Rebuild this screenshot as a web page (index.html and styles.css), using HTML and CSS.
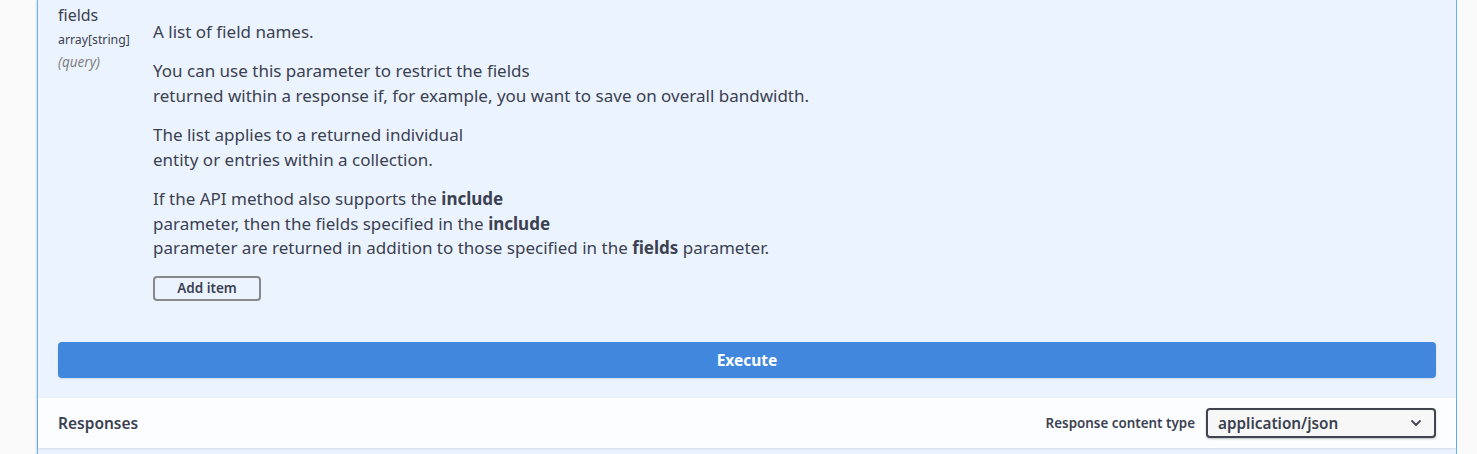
FILE: index.html
```html
<!DOCTYPE html>
<html>
<head>
<meta charset="utf-8">
<link rel="stylesheet" href="styles.css">
</head>
<body>
<div class="page">
  <div class="opblock">
    <div class="param-row">
      <div class="param-name">
        <div class="name">fields</div>
        <div class="type">array[string]</div>
        <div class="in">(query)</div>
      </div>
      <div class="param-desc">
        <p>A list of field names.</p>
        <p>You can use this parameter to restrict the fields<br>returned within a response if, for example, you want to save on overall bandwidth.</p>
        <p>The list applies to a returned individual<br>entity or entries within a collection.</p>
        <p>If the API method also supports the <b>include</b><br>parameter, then the fields specified in the <b>include</b><br>parameter are returned in addition to those specified in the <b>fields</b> parameter.</p>
        <button class="add-item">Add item</button>
      </div>
    </div>
    <div class="execute-wrapper">
      <button class="execute">Execute</button>
    </div>
    <div class="responses-header">
      <div class="responses-title">Responses</div>
      <div class="content-type">
        <span class="ct-label">Response content type</span>
        <div class="select">
          <span>application/json</span>
          <svg width="12" height="8" viewBox="0 0 12 8"><path d="M2 2 L6 6 L10 2" fill="none" stroke="#41444e" stroke-width="1.8" stroke-linecap="round" stroke-linejoin="round"/></svg>
        </div>
      </div>
    </div>
    <div class="responses-body"></div>
  </div>
</div>
</body>
</html>
```

FILE: styles.css
```css
* { box-sizing: border-box; }
html, body {
  margin: 0;
  padding: 0;
  background: #fafafa;
  font-family: "Noto Sans", "Open Sans", sans-serif;
  color: #3b4151;
}
.page {
  padding-left: 37px;
  width: 1457px;
  height: 454px;
  overflow: hidden;
}
.opblock {
  width: 1420px;
  height: 500px;
  background: #ebf3fe;
  border-left: 1px solid #61affe;
  border-right: 1px solid #61affe;
  box-shadow: 0 0 3px rgba(0,0,0,0.19);
}
.param-row {
  display: flex;
  padding: 0 20px;
}
.param-name {
  width: 95px;
  flex: none;
}
.name {
  font-size: 16px;
  line-height: 20px;
  padding-top: 5px;
}
.type {
  font-size: 12.3px;
  line-height: 20px;
  margin-top: 5px;
}
.in {
  font-size: 13.5px;
  line-height: 20px;
  margin-top: 2px;
  font-style: italic;
  color: #808080;
}
.param-desc {
  padding-top: 4.5px;
  font-size: 17px;
  line-height: 24.5px;
}
.param-desc p {
  margin: 15px 0;
}
.param-desc b { font-weight: 700; }
.add-item {
  display: block;
  margin-top: 3.5px;
  width: 108px;
  height: 25px;
  border: 2px solid #888;
  border-radius: 4px;
  background: transparent;
  font-family: inherit;
  font-size: 13.5px;
  font-weight: 600;
  color: #3b4151;
  padding: 0;
}
.execute-wrapper {
  padding: 41px 20px 20px;
}
.execute {
  display: block;
  width: 100%;
  height: 36px;
  border: none;
  border-radius: 4px;
  background: #4187de;
  color: #fff;
  font-family: inherit;
  font-size: 15.5px;
  font-weight: 700;
  box-shadow: 0 1px 2px rgba(0,0,0,0.1);
}
.responses-header {
  height: 50px;
  background: rgba(255,255,255,0.8);
  box-shadow: 0 1px 2px rgba(0,0,0,0.1);
  display: flex;
  align-items: center;
  justify-content: space-between;
  padding: 0 20px;
}
.responses-title {
  font-size: 15.5px;
  font-weight: 600;
}
.content-type {
  display: flex;
  align-items: center;
  gap: 11px;
}
.ct-label {
  font-size: 13.4px;
  font-weight: 600;
}
.select {
  width: 230px;
  height: 30px;
  border: 2px solid #41444e;
  border-radius: 4px;
  background: #f7f7f7;
  display: flex;
  align-items: center;
  justify-content: space-between;
  padding: 0 12px 0 10px;
  font-size: 15.3px;
  font-weight: 600;
  box-shadow: 0 1px 2px rgba(0,0,0,0.25);
}
```
